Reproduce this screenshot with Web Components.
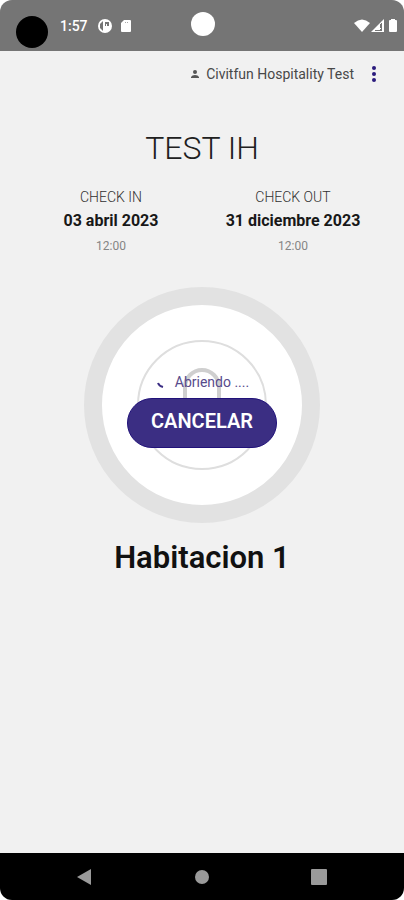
<!DOCTYPE html>
<html lang="es">
<head>
<meta charset="utf-8">
<meta name="viewport" content="width=device-width, initial-scale=1">
<title>Civitfun Hospitality Test</title>
<style>
  body {
    margin: 0;
    background-color: white;
    font-family: Roboto, "Liberation Sans", sans-serif;
    color: #202020;
  }
</style>
</head>
<body>
<phone-screen>
  <status-bar slot="top" time="1:57"></status-bar>
  <user-bar name="Civitfun Hospitality Test"></user-bar>
  <booking-info name="TEST IH">
    <booking-date label="CHECK IN" date="03 abril 2023" time="12:00"></booking-date>
    <booking-date label="CHECK OUT" date="31 diciembre 2023" time="12:00"></booking-date>
  </booking-info>
  <room-lock room="Habitacion 1">
    <opening-status>Abriendo ....</opening-status>
  </room-lock>
  <nav-bar slot="bottom"></nav-bar>
</phone-screen>

<script>
class PhoneScreen extends HTMLElement {
  constructor() {
    super();
    this.shadowDOM = this.attachShadow({ mode: "open" });
  }

  connectedCallback() {
    this.shadowDOM.innerHTML = /*html*/ `
    <style>
      :host {
          display: flex;
          flex-direction: column;
          min-height: 100vh;
          border-radius: 12px;
          overflow: hidden;
          background-color: #f1f1f1;
      }

      main {
          flex: 1;
      }
    </style>

    <slot name="top"></slot>
    <main><slot></slot></main>
    <slot name="bottom"></slot>
    `;
  }
}
customElements.define("phone-screen", PhoneScreen);

class StatusBar extends HTMLElement {
  constructor() {
    super();
    this.shadowDOM = this.attachShadow({ mode: "open" });
  }

  connectedCallback() {
    this.shadowDOM.innerHTML = /*html*/ `
    <style>
      :host {
          display: grid;
          grid-template-columns: 1fr auto 1fr;
          height: 51px;
          padding: 0 6px 0 16px;
          background-color: #757575;
          color: white;
      }

      .left, .right {
          display: flex;
          align-items: center;
      }

      .camera {
          width: 32px;
          height: 32px;
          margin: 12px 12px 0 0;
          border-radius: 50%;
          background-color: black;
      }

      .time {
          margin-right: 10px;
          font-size: 14px;
          font-weight: 500;
      }

      .left svg {
          margin-right: 8px;
      }

      .sensor {
          width: 24px;
          height: 24px;
          margin-top: 12px;
          margin-right: 8px;
          border-radius: 50%;
          background-color: white;
      }

      .right {
          justify-content: flex-end;
          gap: 1px;
      }

      svg {
          display: block;
          fill: white;
      }
    </style>

    <div class="left">
      <span class="camera"></span>
      <span class="time">${this.getAttribute("time")}</span>
      <svg width="14" height="14" viewBox="0 0 14 14">
        <circle cx="7" cy="7" r="7"/>
        <path d="M5 2L2 5v4l3 3z" fill="#757575"/>
        <path d="M7 3h4v4H9V5H8v2H7z" fill="#757575"/>
      </svg>
      <svg width="12" height="14" viewBox="0 0 12 14">
        <path d="M4 1h6q1 0 1 1v10q0 1-1 1H2q-1 0-1-1V4z"/>
        <path d="M5 3h1v1H5zM7 3h1v1H7z" fill="#aaa"/>
      </svg>
    </div>
    <span class="sensor"></span>
    <div class="right">
      <svg width="16" height="14" viewBox="0 0 16 14">
        <path d="M0 4Q8-3 16 4L8 13z"/>
      </svg>
      <svg width="14" height="14" viewBox="0 0 14 14">
        <path d="M0 13L13 0v13z"/>
        <path d="M9 5h1v4H9zM9 10h1v1H9zM11 4v8H4v-1h6V4z" fill="#757575"/>
      </svg>
      <svg width="12" height="14" viewBox="0 0 12 14">
        <path d="M4 1h1V0h4v1h1q1 0 1 1v10q0 1-1 1H4q-1 0-1-1V2q0-1 1-1z"/>
      </svg>
    </div>
    `;
  }
}
customElements.define("status-bar", StatusBar);

class UserBar extends HTMLElement {
  constructor() {
    super();
    this.shadowDOM = this.attachShadow({ mode: "open" });
  }

  connectedCallback() {
    this.shadowDOM.innerHTML = /*html*/ `
    <style>
      :host {
          display: flex;
          align-items: center;
          justify-content: flex-end;
          height: 46px;
          padding-right: 20px;
          font-size: 14px;
          color: #484848;
      }

      .user {
          width: 10px;
          height: 10px;
          margin-right: 6px;
          fill: #555;
      }

      button {
          display: flex;
          justify-content: center;
          width: 20px;
          height: 24px;
          margin-left: 10px;
          padding: 4px 0;
          border: 0;
          background: none;
          fill: #2a1a7d;
          cursor: pointer;
      }
    </style>

    <svg class="user" viewBox="0 0 10 10">
      <circle cx="5" cy="3" r="2"/>
      <path d="M1 9V8q1-2 4-2t4 2v1z"/>
    </svg>
    <span>${this.getAttribute("name")}</span>
    <button type="button" aria-label="Menú">
      <svg width="4" height="16" viewBox="0 0 4 16">
        <circle cx="2" cy="2" r="2"/>
        <circle cx="2" cy="8" r="2"/>
        <circle cx="2" cy="14" r="2"/>
      </svg>
    </button>
    `;
  }
}
customElements.define("user-bar", UserBar);

class BookingInfo extends HTMLElement {
  constructor() {
    super();
    this.shadowDOM = this.attachShadow({ mode: "open" });
  }

  connectedCallback() {
    this.shadowDOM.innerHTML = /*html*/ `
    <style>
      :host {
          display: block;
          padding: 31px 20px 0;
          text-align: center;
      }

      h1 {
          margin: 0 0 19px;
          font-size: 32px;
          font-weight: 300;
          line-height: 40px;
      }

      .dates {
          display: grid;
          grid-template-columns: 1fr 1fr;
      }
    </style>

    <h1>${this.getAttribute("name")}</h1>
    <div class="dates"><slot></slot></div>
    `;
  }
}
customElements.define("booking-info", BookingInfo);

class BookingDate extends HTMLElement {
  constructor() {
    super();
    this.shadowDOM = this.attachShadow({ mode: "open" });
  }

  connectedCallback() {
    this.shadowDOM.innerHTML = /*html*/ `
    <style>
      :host {
          display: flex;
          flex-direction: column;
          align-items: center;
          line-height: 20px;
          white-space: nowrap;
      }

      .label {
          font-size: 14px;
          font-weight: 300;
          color: #303030;
      }

      .date {
          margin: 4px 0 5px;
          font-size: 16px;
          font-weight: 700;
          color: #181818;
      }

      .time {
          font-size: 12px;
          color: #858585;
      }
    </style>

    <span class="label">${this.getAttribute("label")}</span>
    <span class="date">${this.getAttribute("date")}</span>
    <span class="time">${this.getAttribute("time")}</span>
    `;
  }
}
customElements.define("booking-date", BookingDate);

class OpeningStatus extends HTMLElement {
  constructor() {
    super();
    this.shadowDOM = this.attachShadow({ mode: "open" });
  }

  connectedCallback() {
    this.shadowDOM.innerHTML = /*html*/ `
    <style>
      :host {
          display: flex;
          flex-direction: column;
          align-items: center;
      }

      .message {
          display: flex;
          align-items: center;
          height: 20px;
          margin-bottom: 6px;
          font-size: 14px;
          color: #574b8c;
      }

      .message svg {
          margin-right: 8px;
          fill: none;
          stroke: #3b2e83;
          stroke-width: 2;
      }

      button {
          width: 150px;
          height: 50px;
          padding: 0 0 4px;
          border: 1px solid #21127a;
          border-radius: 50px;
          background-color: #3b2e83;
          color: white;
          font-family: inherit;
          font-size: 20px;
          font-weight: 600;
          cursor: pointer;
      }
    </style>

    <div class="message" role="status">
      <svg width="12" height="12" viewBox="0 0 12 12">
        <path d="M3 7q1 3 5 4"/>
      </svg>
      <slot></slot>
    </div>
    <button type="button">CANCELAR</button>
    `;
  }
}
customElements.define("opening-status", OpeningStatus);

class RoomLock extends HTMLElement {
  constructor() {
    super();
    this.shadowDOM = this.attachShadow({ mode: "open" });
  }

  connectedCallback() {
    this.shadowDOM.innerHTML = /*html*/ `
    <style>
      :host {
          display: flex;
          flex-direction: column;
          align-items: center;
          padding-top: 31px;
      }

      /* the lock and the status share one grid cell */
      .ring {
          display: grid;
          place-items: center;
          box-sizing: border-box;
          width: 236px;
          height: 236px;
          border: 18px solid #e2e2e2;
          border-radius: 50%;
          background-color: white;
      }

      .lock, slot {
          grid-area: 1 / 1;
      }

      slot {
          display: block;
          padding-top: 10px;
      }

      .lock {
          fill: none;
          stroke: #dedede;
          stroke-width: 2;
      }

      .shackle {
          stroke: #cfcfcf;
          stroke-width: 4;
      }

      .body {
          fill: #cfcfcf;
          stroke: none;
      }

      h2 {
          margin: 15px 0 0;
          font-size: 31px;
          font-weight: 600;
          line-height: 40px;
          color: #111;
      }
    </style>

    <div class="ring">
      <svg class="lock" width="130" height="130" viewBox="0 0 130 130">
        <circle cx="65" cy="65" r="64"/>
        <path class="shackle" d="M48 66V47a17 17 0 0 1 34 0v19"/>
        <rect class="body" x="42" y="64" width="46" height="34" rx="4"/>
      </svg>
      <slot></slot>
    </div>
    <h2>${this.getAttribute("room")}</h2>
    `;
  }
}
customElements.define("room-lock", RoomLock);

class NavBar extends HTMLElement {
  constructor() {
    super();
    this.shadowDOM = this.attachShadow({ mode: "open" });
  }

  connectedCallback() {
    this.shadowDOM.innerHTML = /*html*/ `
    <style>
      :host {
          display: flex;
          align-items: center;
          justify-content: center;
          gap: 93px;
          height: 47px;
          background-color: black;
      }

      button {
          display: flex;
          align-items: center;
          justify-content: center;
          width: 24px;
          height: 24px;
          padding: 0;
          border: 0;
          background: none;
          fill: #9a9a9a;
          cursor: pointer;
      }
    </style>

    <button type="button" aria-label="Atrás">
      <svg width="16" height="16" viewBox="0 0 16 16"><path d="M0 8L14 0v16z"/></svg>
    </button>
    <button type="button" aria-label="Inicio">
      <svg width="16" height="16" viewBox="0 0 16 16"><circle cx="8" cy="8" r="7"/></svg>
    </button>
    <button type="button" aria-label="Recientes">
      <svg width="16" height="16" viewBox="0 0 16 16"><rect width="16" height="16" rx="1"/></svg>
    </button>
    `;
  }
}
customElements.define("nav-bar", NavBar);
</script>
</body>
</html>
